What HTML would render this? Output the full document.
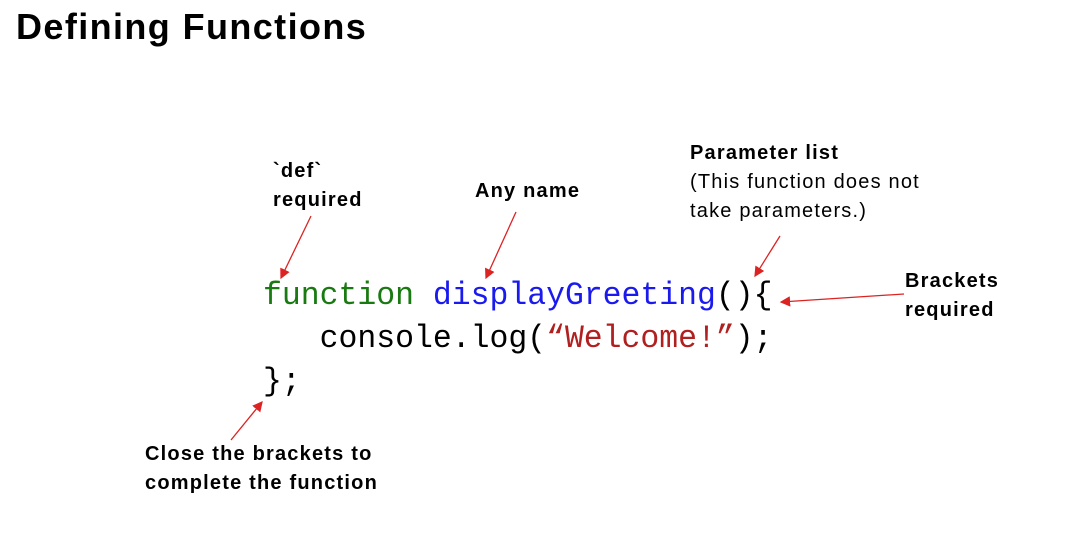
<!DOCTYPE html>
<html><head><meta charset="utf-8"><style>
body{margin:0;width:1068px;height:543px;background:#fff;position:relative;overflow:hidden;font-family:"Liberation Sans",sans-serif}
.t{position:absolute;left:16px;top:6px;font-size:36px;font-weight:bold;color:#000;letter-spacing:1.4px}
.l{position:absolute;font-size:20px;line-height:29px;color:#000;white-space:nowrap;letter-spacing:1.2px}
.b{font-weight:bold}
.code{position:absolute;left:263px;font-family:"Liberation Mono",monospace;font-size:32.7px;white-space:pre;line-height:43px;transform:scaleX(0.962);transform-origin:0 0}
</style></head><body>
<div class="t">Defining Functions</div>
<div class="l b" style="left:273px;top:157px">`def`<br>required</div>
<div class="l b" style="left:475px;top:177px">Any name</div>
<div class="l" style="left:690px;top:139px"><b>Parameter list</b><br>(This function does not<br>take parameters.)</div>
<div class="l b" style="left:905px;top:267px">Brackets<br>required</div>
<div class="l b" style="left:145px;top:440px">Close the brackets to<br>complete the function</div>
<div class="code" style="top:274px"><span style="color:#1a7a12">function</span> <span style="color:#1a1aee">displayGreeting</span>(){
   console.log(<span style="color:#b02020">“Welcome!”</span>);
};</div>
<svg width="1068" height="543" style="position:absolute;left:0;top:0">
<defs><marker id="a" markerWidth="8" markerHeight="8" refX="7" refY="4" orient="auto"><path d="M0,0L8,4L0,8z" fill="#dd2222"/></marker></defs>
<g stroke="#dd2222" stroke-width="1.3" marker-end="url(#a)">
<line x1="311" y1="216" x2="281" y2="278"/>
<line x1="516" y1="212" x2="486" y2="278"/>
<line x1="780" y1="236" x2="755" y2="276"/>
<line x1="904" y1="294" x2="781" y2="302"/>
<line x1="231" y1="440" x2="262" y2="402"/>
</g></svg>
</body></html>
